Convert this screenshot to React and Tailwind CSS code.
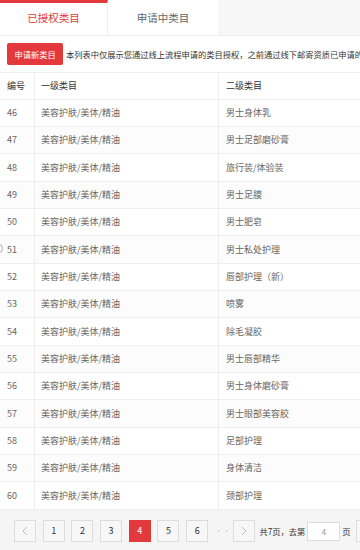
import React from "react";

const rows = [
  [46, "男士身体乳"],
  [47, "男士足部磨砂膏"],
  [48, "旅行装/体验装"],
  [49, "男士足膜"],
  [50, "男士肥皂"],
  [51, "男士私处护理"],
  [52, "唇部护理（新）"],
  [53, "喷雾"],
  [54, "除毛凝胶"],
  [55, "男士唇部精华"],
  [56, "男士身体磨砂膏"],
  [57, "男士眼部美容胶"],
  [58, "足部护理"],
  [59, "身体清洁"],
  [60, "颈部护理"],
];

function PageBtn({ children, active, muted }) {
  return (
    <div
      className={
        "w-[22px] h-[22px] shrink-0 flex items-center justify-center text-[9px] border " +
        (active
          ? "bg-[#e4393c] border-[#e4393c] text-white"
          : "bg-[#f7f7f7] border-[#dddddd] " + (muted ? "text-[#bbbbbb]" : "text-[#333333]"))
      }
    >
      {children}
    </div>
  );
}

export default function App() {
  return (
    <div className="w-[360px] h-[550px] overflow-hidden bg-white relative flex flex-col font-['Noto_Sans_CJK_SC','Noto_Sans',sans-serif]">
      {/* Tabs */}
      <div className="flex h-[36px] shrink-0 bg-[#f7f7f7] border-b border-[#eeeeee]">
        <div className="w-[108px] bg-white border-t-[3px] border-[#e4393c] border-r border-r-[#eeeeee] flex items-center justify-center text-[10.5px] text-[#e4393c] pb-[3px]">
          已授权类目
        </div>
        <div className="w-[110px] bg-white flex items-center justify-center text-[10.5px] text-[#666666]">
          申请中类目
        </div>
      </div>

      {/* Toolbar */}
      <div className="h-[36px] shrink-0 flex items-center pl-[7px] gap-[3px] whitespace-nowrap">
        <div className="w-[56px] h-[22px] shrink-0 rounded-[2px] bg-[#e4393c] text-white text-[8.25px] flex items-center justify-center">
          申请新类目
        </div>
        <div className="text-[8.25px] text-[#333333]">
          本列表中仅展示您通过线上流程申请的类目授权，之前通过线下邮寄资质已申请的类目请在旧版查看
        </div>
      </div>

      {/* Table */}
      <div className="shrink-0 w-[440px] border-t border-[#eeeeee]">
        <div className="grid grid-cols-[35px_184px_221px] h-[26.5px] border-b border-[#eeeeee] text-[9px] text-[#333333]">
          <div className="flex items-center pl-[7px] border-r border-[#eeeeee]">编号</div>
          <div className="flex items-center pl-[6px] border-r border-[#eeeeee]">一级类目</div>
          <div className="flex items-center pl-[7px] border-r border-[#eeeeee]">二级类目</div>
        </div>
        {rows.map(([n, name], i) => (
          <div
            key={n}
            className={
              "grid grid-cols-[35px_184px_221px] h-[27.35px] border-b border-[#eeeeee] text-[9px] text-[#666666] " +
              (i % 2 === 1 ? "bg-[#fcfcfc]" : "bg-white")
            }
          >
            <div className="flex items-center pl-[7px] border-r border-[#eeeeee]">{n}</div>
            <div className="flex items-center pl-[6px] border-r border-[#eeeeee]">美容护肤/美体/精油</div>
            <div className="flex items-center pl-[7px] border-r border-[#eeeeee]">{name}</div>
          </div>
        ))}
      </div>

      {/* Pagination */}
      <div className="flex-1 bg-[#f5f5f5] pt-[10.5px] pl-[14px]">
        <div className="flex items-center whitespace-nowrap">
          <div className="flex items-center gap-[6.7px]">
            <PageBtn muted>
              <svg width="8" height="10" viewBox="0 0 8 10" fill="none">
                <path d="M6 1L2 5l4 4" stroke="#bbbbbb" strokeWidth="1" />
              </svg>
            </PageBtn>
            <PageBtn>1</PageBtn>
            <PageBtn>2</PageBtn>
            <PageBtn>3</PageBtn>
            <PageBtn active>4</PageBtn>
            <PageBtn>5</PageBtn>
            <PageBtn>6</PageBtn>
            <div className="w-[11px] text-center text-[8px] text-[#cccccc] leading-none">···</div>
            <PageBtn muted>
              <svg width="8" height="10" viewBox="0 0 8 10" fill="none">
                <path d="M2 1l4 4-4 4" stroke="#bbbbbb" strokeWidth="1" />
              </svg>
            </PageBtn>
          </div>
          <div className="ml-[5px] text-[8.25px] text-[#333333]">共7页，去第</div>
          <div className="ml-[2px] w-[33px] h-[19px] shrink-0 bg-white border border-[#dddddd] flex items-center justify-center text-[8.25px] text-[#999999]">
            4
          </div>
          <div className="ml-[2px] text-[8.25px] text-[#333333]">页</div>
          <div className="ml-[5px] w-[30px] h-[22px] shrink-0 bg-[#f7f7f7] border border-[#dddddd]" />
        </div>
      </div>

      {/* partial floating circle at left edge */}
      <div className="absolute left-[-6px] top-[244px] w-[9px] h-[9px] rounded-full border border-[#aaaaaa] bg-white" />
    </div>
  );
}
